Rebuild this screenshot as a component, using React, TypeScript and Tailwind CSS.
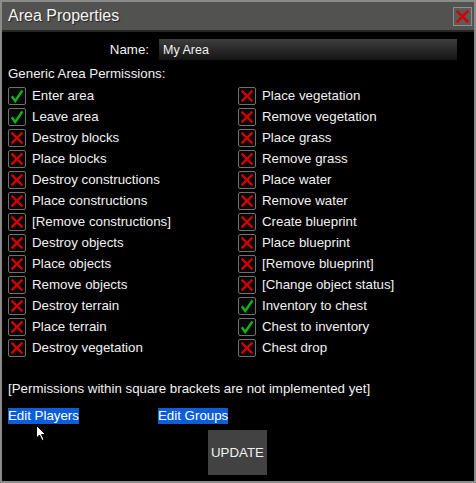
import React from "react";

const left: [string, boolean][] = [
  ["Enter area", true],
  ["Leave area", true],
  ["Destroy blocks", false],
  ["Place blocks", false],
  ["Destroy constructions", false],
  ["Place constructions", false],
  ["[Remove constructions]", false],
  ["Destroy objects", false],
  ["Place objects", false],
  ["Remove objects", false],
  ["Destroy terrain", false],
  ["Place terrain", false],
  ["Destroy vegetation", false],
];
const right: [string, boolean][] = [
  ["Place vegetation", false],
  ["Remove vegetation", false],
  ["Place grass", false],
  ["Remove grass", false],
  ["Place water", false],
  ["Remove water", false],
  ["Create blueprint", false],
  ["Place blueprint", false],
  ["[Remove blueprint]", false],
  ["[Change object status]", false],
  ["Inventory to chest", true],
  ["Chest to inventory", true],
  ["Chest drop", false],
];

function RedX({ size = 12 }: { size?: number }) {
  return (
    <svg width={size} height={size} viewBox="0 0 12 12">
      <path d="M1.5 1.5 L10.5 10.5 M10.5 1.5 L1.5 10.5" stroke="#d40000" strokeWidth="2.4" strokeLinecap="square" />
    </svg>
  );
}

function Check() {
  return (
    <svg width="14" height="14" viewBox="0 0 14 14">
      <path d="M1.8 7.2 L5.2 12 L12.4 1.5" stroke="#12b312" strokeWidth="2.4" fill="none" strokeLinecap="butt" strokeLinejoin="miter" />
    </svg>
  );
}

function Row({ label, on }: { label: string; on: boolean }) {
  return (
    <div className="flex h-[21px] items-center gap-[6px]">
      <div className="flex h-[18px] w-[18px] items-center justify-center rounded-[2px] border border-[#707070] bg-[#080808]">
        {on ? <Check /> : <RedX />}
      </div>
      <span className="text-[13.3px] leading-[16px] text-[#f2f2f2] [text-shadow:0_0_2px_#000]">{label}</span>
    </div>
  );
}

export default function App() {
  return (
    <div
      className="relative flex h-[483px] w-[476px] flex-col bg-[#8b8b8b] p-[2px]"
      style={{ fontFamily: '"Liberation Sans", Arial, sans-serif' }}
    >
      <div className="flex h-[28px] items-center justify-between bg-[#525351] pl-[6px] pr-[2px]">
        <span className="text-[16px] leading-[20px] text-[#f4f4f4] [text-shadow:1px_1px_1px_#222]">Area Properties</span>
        <div className="flex h-[19px] w-[19px] items-center justify-center border border-[#8e8e8e] bg-[#5a5a58]">
          <RedX size={13} />
        </div>
      </div>
      <div className="h-[2px] bg-[#262626]" />
      <div className="flex flex-1 flex-col bg-black pt-[7px] pl-[6px]">
        <div className="flex h-[21px] items-center">
          <span className="w-[145px] pr-[4px] text-right text-[13.3px] leading-[16px] text-[#f2f2f2]">Name:</span>
          <div className="ml-[6px] flex h-[21px] w-[298px] items-center bg-[linear-gradient(to_bottom,#3e3e3e,#141414)] pl-[4px]">
            <span className="text-[12.5px] leading-[16px] text-[#f2f2f2]">My Area</span>
          </div>
        </div>
        <div className="mt-[6px] text-[13.3px] leading-[16px] text-[#f2f2f2]">Generic Area Permissions:</div>
        <div className="mt-[3px] flex">
          <div className="flex w-[230px] flex-col">
            {left.map(([l, o]) => (
              <Row key={l} label={l} on={o} />
            ))}
          </div>
          <div className="flex flex-col">
            {right.map(([l, o]) => (
              <Row key={l} label={l} on={o} />
            ))}
          </div>
        </div>
        <div className="mt-[23px] text-[13.3px] leading-[16px] text-[#f2f2f2]">
          [Permissions within square brackets are not implemented yet]
        </div>
        <div className="mt-[11px] flex h-[16px] items-start">
          <div className="flex w-[150px]">
            <span className="bg-[#0b5ed7] text-[13.3px] leading-[16px] text-white">Edit Players</span>
          </div>
          <span className="bg-[#0b5ed7] text-[13.3px] leading-[16px] text-white">Edit Groups</span>
        </div>
        <div className="mt-[6px] flex justify-start pl-[200px]">
          <div className="flex h-[45px] w-[59px] items-center justify-center bg-[#424242] text-[13.3px] text-[#f2f2f2]">
            UPDATE
          </div>
        </div>
      </div>
      <svg className="absolute left-[36px] top-[425px]" width="12" height="18" viewBox="0 0 12 18">
        <path d="M0.5 0.5 L0.5 13 L3.5 10 L6 15.5 L8 14.5 L5.5 9.5 L9.5 9.5 Z" fill="#fff" stroke="#000" strokeWidth="1" />
      </svg>
    </div>
  );
}
